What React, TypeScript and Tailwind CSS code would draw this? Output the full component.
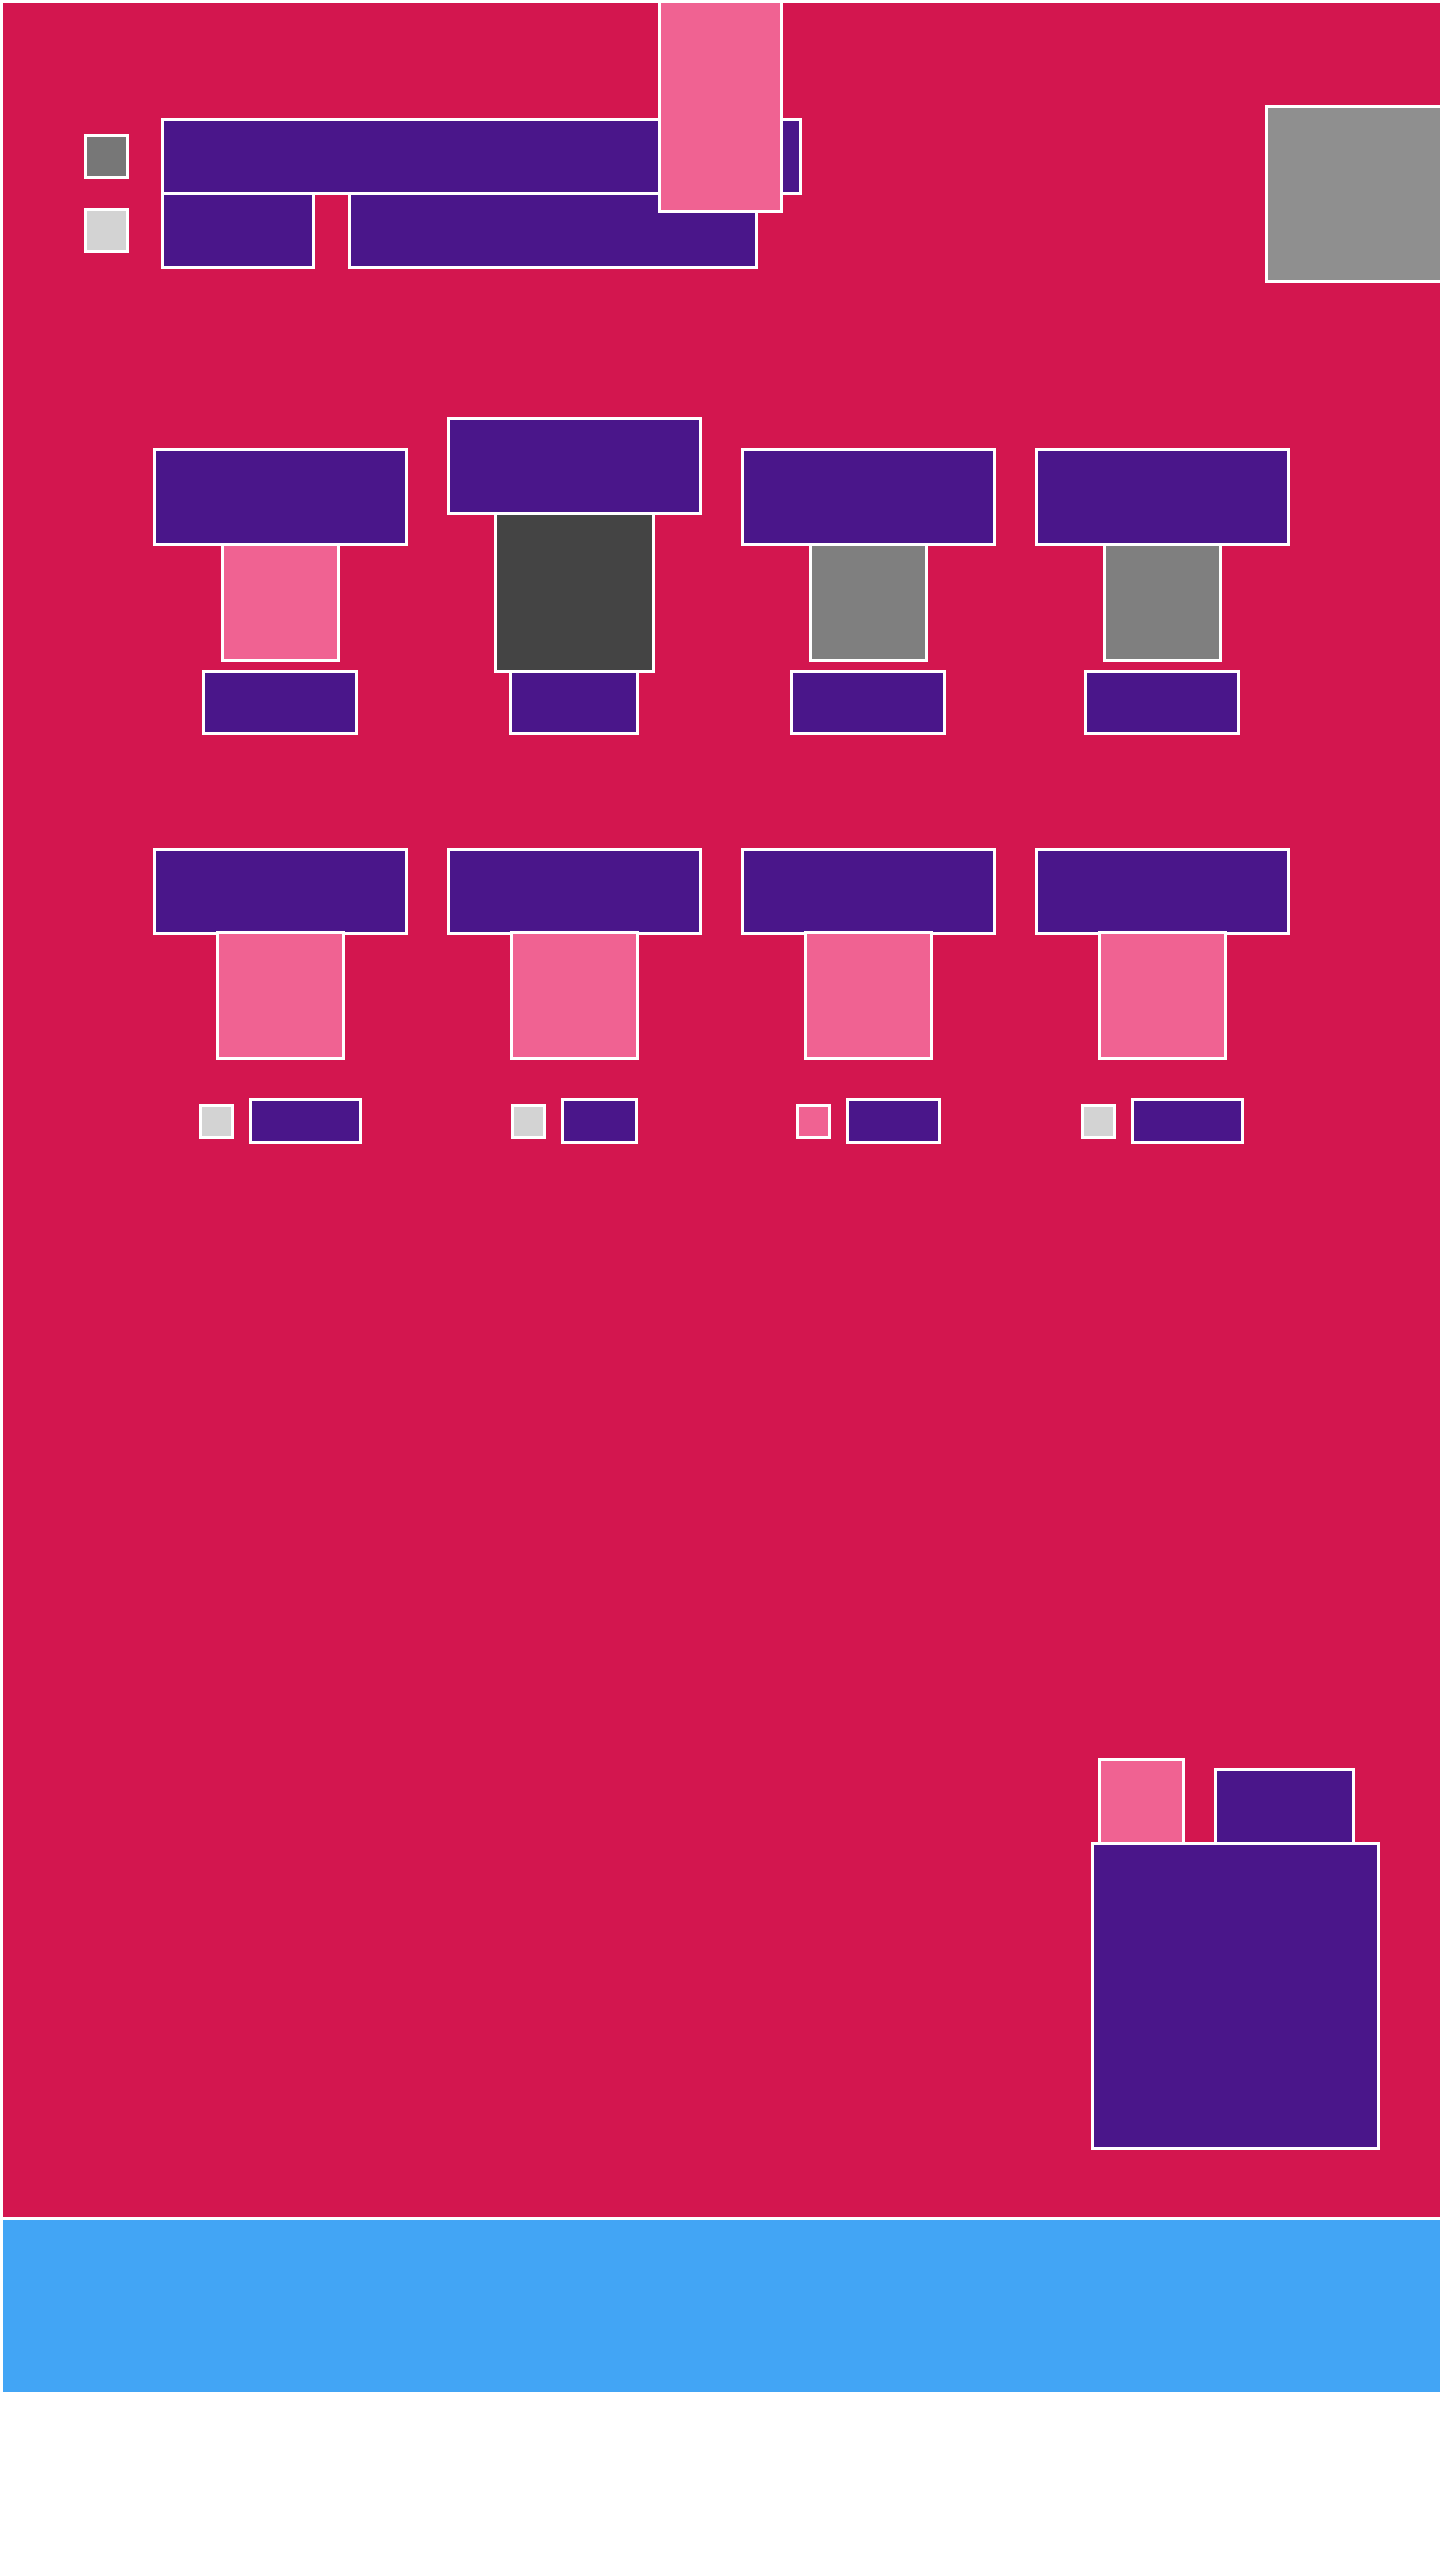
import React from "react";

const B = "border-[3px] border-white box-border shrink-0";
const PURPLE = "bg-[#4a168a]";
const PINK = "bg-[#f06292]";

function Card({
  top,
  mid,
  bottom,
}: {
  top: string;
  mid: React.ReactNode;
  bottom: React.ReactNode;
}) {
  return (
    <div className="flex flex-col items-center w-[255px]">
      <div className={`${B} ${PURPLE} w-[255px] ${top}`} />
      {mid}
      {bottom}
    </div>
  );
}

function Label({ sq, w }: { sq: string; w: string }) {
  return (
    <div className="flex items-center gap-[15px] mt-[38px]">
      <div className={`${B} ${sq} w-[35px] h-[35px]`} />
      <div className={`${B} ${PURPLE} ${w} h-[46px]`} />
    </div>
  );
}

export default function App() {
  return (
    <div className="w-[1440px] min-h-[2560px] bg-white pl-[3px] pt-[3px] overflow-hidden">
      <div className="bg-[#d3164f] h-[2214px] flex flex-col overflow-hidden">
        {/* header */}
        <div className="relative flex items-start pl-[81px] h-[280px]">
          <div className="flex flex-col gap-[29px] mt-[131px]">
            <div className={`${B} bg-[#777777] w-[45px] h-[45px]`} />
            <div className={`${B} bg-[#d3d3d3] w-[45px] h-[45px]`} />
          </div>
          <div className="flex flex-col ml-[32px] mt-[115px]">
            <div className={`${B} ${PURPLE} w-[641px] h-[77px]`} />
            <div className="flex gap-[33px] -mt-[3px]">
              <div className={`${B} ${PURPLE} w-[154px] h-[77px]`} />
              <div className={`${B} ${PURPLE} w-[410px] h-[77px]`} />
            </div>
          </div>
          <div className={`${B} bg-[#8f8f8f] ml-auto -mr-[3px] mt-[102px] w-[178px] h-[178px]`} />
          <div className={`absolute left-[655px] -top-[3px] ${B} ${PINK} w-[125px] h-[213px]`} />
        </div>

        {/* row 1 */}
        <div className="flex items-end gap-[39px] pl-[150px] mt-[134px]">
          <Card
            top="h-[98px]"
            mid={<div className={`${B} ${PINK} w-[119px] h-[119px] -mt-[3px]`} />}
            bottom={<div className={`${B} ${PURPLE} w-[156px] h-[65px] mt-[8px] -ml-[1px]`} />}
          />
          <Card
            top="h-[98px]"
            mid={<div className={`${B} bg-[#444444] w-[161px] h-[161px] -mt-[3px]`} />}
            bottom={<div className={`${B} ${PURPLE} w-[130px] h-[65px] -mt-[3px] -ml-[1px]`} />}
          />
          <Card
            top="h-[98px]"
            mid={<div className={`${B} bg-[#7f7f7f] w-[119px] h-[119px] -mt-[3px]`} />}
            bottom={<div className={`${B} ${PURPLE} w-[156px] h-[65px] mt-[8px] -ml-[1px]`} />}
          />
          <Card
            top="h-[98px]"
            mid={<div className={`${B} bg-[#7f7f7f] w-[119px] h-[119px] -mt-[3px]`} />}
            bottom={<div className={`${B} ${PURPLE} w-[156px] h-[65px] mt-[8px] -ml-[1px]`} />}
          />
        </div>

        {/* row 2 */}
        <div className="flex items-start gap-[39px] pl-[150px] mt-[113px]">
          <Card
            top="h-[87px]"
            mid={<div className={`${B} ${PINK} w-[129px] h-[129px] -mt-[4px]`} />}
            bottom={<Label sq="bg-[#d3d3d3]" w="w-[113px]" />}
          />
          <Card
            top="h-[87px]"
            mid={<div className={`${B} ${PINK} w-[129px] h-[129px] -mt-[4px]`} />}
            bottom={<Label sq="bg-[#d3d3d3]" w="w-[77px]" />}
          />
          <Card
            top="h-[87px]"
            mid={<div className={`${B} ${PINK} w-[129px] h-[129px] -mt-[4px]`} />}
            bottom={<Label sq={PINK} w="w-[95px]" />}
          />
          <Card
            top="h-[87px]"
            mid={<div className={`${B} ${PINK} w-[129px] h-[129px] -mt-[4px]`} />}
            bottom={<Label sq="bg-[#d3d3d3]" w="w-[113px]" />}
          />
        </div>

        {/* bottom-right group */}
        <div className="flex justify-end pr-[60px] mt-[614px]">
          <div className="flex flex-col">
            <div className="flex items-end gap-[29px] pl-[7px]">
              <div className={`${B} ${PINK} w-[87px] h-[87px]`} />
              <div className={`${B} ${PURPLE} w-[141px] h-[77px]`} />
            </div>
            <div className={`${B} ${PURPLE} w-[289px] h-[308px] -mt-[3px]`} />
          </div>
        </div>
      </div>
      <div className="bg-[#42a5f5] h-[172px] mt-[3px]" />
    </div>
  );
}
